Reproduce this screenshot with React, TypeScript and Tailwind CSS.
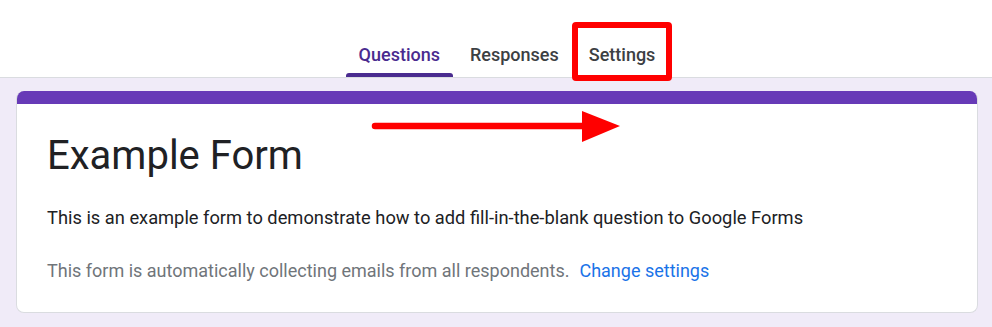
import React from "react";

export default function App() {
  return (
    <div className="relative w-[992px] h-[327px] overflow-hidden bg-[#f0ebf8]" style={{ fontFamily: "Roboto, 'Liberation Sans', sans-serif" }}>
      <div className="h-[78px] bg-white border-b border-[#dadce0] flex justify-center items-end pl-[22px]">
        <div className="flex gap-[4px]">
          <div className="relative px-[13px] h-[36px] flex items-start text-[18px] font-medium text-[#4a2b8f]">
            Questions
            <div className="absolute left-0 right-0 bottom-0 h-[4px] rounded-t-[3px] bg-[#4a2b8f]" />
          </div>
          <div className="px-[13px] h-[36px] flex items-start text-[18px] font-medium text-[#3c4043]">Responses</div>
          <div className="px-[13px] h-[36px] flex items-start text-[18px] font-medium text-[#3c4043]">Settings</div>
        </div>
      </div>
      <div className="pl-[16px] pr-[14px] pt-[13px]">
        <div className="rounded-[8px] bg-white border border-[#dadce0] border-t-0 overflow-hidden h-[222px]">
          <div className="h-[13px] bg-[#673ab7]" />
          <div className="pl-[30px] pt-[28px]">
            <div className="text-[40px] leading-[48px] text-[#202124]">Example Form</div>
            <div className="mt-[26px] text-[18.3px] leading-[24px] text-[#202124]">
              This is an example form to demonstrate how to add fill-in-the-blank question to Google Forms
            </div>
            <div className="mt-[29px] text-[18px] leading-[24px] text-[#70757a]">
              This form is automatically collecting emails from all respondents.
              <span className="ml-[10px] text-[#1a73e8]">Change settings</span>
            </div>
          </div>
        </div>
      </div>
      <div className="absolute left-[572px] top-[22px] w-[100px] h-[59px] border-[6px] border-[#ff0000] rounded-[4px]" />
      <svg className="absolute left-0 top-0" width="992" height="327">
        <line x1="375" y1="126" x2="590" y2="126" stroke="#ff0000" strokeWidth="6.5" strokeLinecap="round" />
        <polygon points="582,111 620,126 582,142" fill="#ff0000" />
      </svg>
    </div>
  );
}
